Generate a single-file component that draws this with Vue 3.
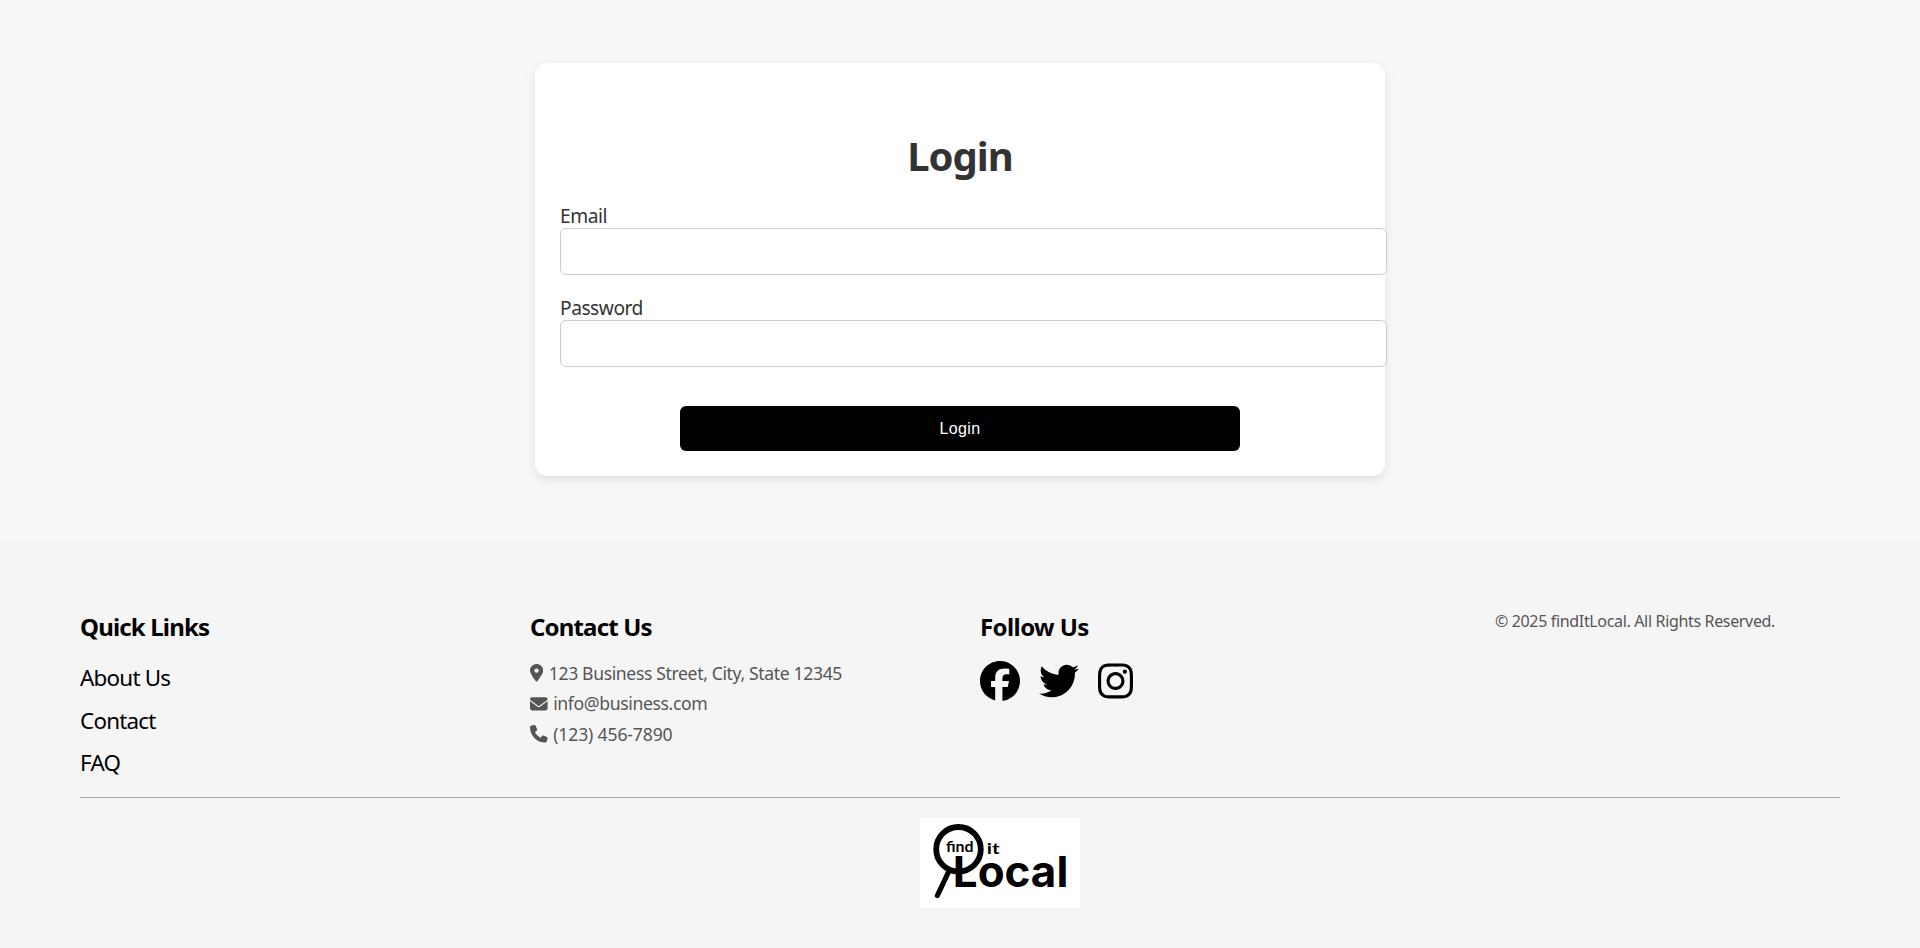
<script setup>
const links = ['About Us', 'Contact', 'FAQ']
</script>

<template>
  <div class="page">
    <main class="auth">
      <form class="card" @submit.prevent>
        <h1>Login</h1>
        <label for="email">Email</label>
        <input id="email" type="email" />
        <label for="password" class="second">Password</label>
        <input id="password" type="password" />
        <button type="submit">Login</button>
      </form>
    </main>

    <footer class="footer">
      <div class="columns">
        <section>
          <h3>Quick Links</h3>
          <ul class="links">
            <li v-for="l in links" :key="l"><a>{{ l }}</a></li>
          </ul>
        </section>
        <section>
          <h3>Contact Us</h3>
          <p class="contact">
            <svg width="13.2" height="17.6" viewBox="0 0 384 512"><path d="M215.7 499.2C267 435 384 279.4 384 192C384 86 298 0 192 0S0 86 0 192c0 87.4 117 243 168.3 307.2c12.3 15.3 35.1 15.3 47.4 0zM192 128a64 64 0 1 1 0 128 64 64 0 1 1 0-128z" /></svg>
            <span>123 Business Street, City, State 12345</span>
          </p>
          <p class="contact">
            <svg width="17.6" height="17.6" viewBox="0 0 512 512"><path d="M48 64C21.500 64 0 85.500 0 112c0 15.100 7.100 29.300 19.200 38.400L236.800 313.600c11.400 8.500 27 8.500 38.400 0L492.800 150.400c12.100-9.100 19.200-23.300 19.200-38.400c0-26.500-21.500-48-48-48H48zM0 176V384c0 35.300 28.700 64 64 64H448c35.300 0 64-28.700 64-64V176L294.400 339.200c-22.800 17.100-54 17.100-76.800 0L0 176z" /></svg>
            <span>info@business.com</span>
          </p>
          <p class="contact phone">
            <svg width="17.6" height="17.6" viewBox="0 0 512 512"><path d="M164.900 24.600c-7.700-18.600-28-28.500-47.400-23.200l-88 24C12.100 30.200 0 46 0 64C0 311.400 200.600 512 448 512c18 0 33.800-12.100 38.600-29.500l24-88c5.300-19.400-4.600-39.700-23.200-47.400l-96-40c-16.300-6.800-35.200-2.100-46.300 11.600L304.700 368C234.300 334.700 177.300 277.700 144 207.300L193.300 167c13.700-11.200 18.400-30 11.600-46.300l-40-96z" /></svg>
            <span>(123) 456-7890</span>
          </p>
        </section>
        <section>
          <h3 class="follow">Follow Us</h3>
          <div class="social">
            <svg width="40" height="40" viewBox="0 0 512 512"><path d="M512 256C512 114.600 397.400 0 256 0S0 114.600 0 256C0 376 82.700 476.800 194.200 504.500V334.200H141.400V256h52.800V222.300c0-87.100 39.400-127.500 125-127.500c16.200 0 44.200 3.200 55.700 6.400V172c-6-.6-16.500-1-29.600-1c-42 0-58.200 15.900-58.200 57.200V256h83.600l-14.400 78.200H287V510.100C413.800 494.800 512 386.900 512 256z" /></svg>
            <svg width="40" height="40" viewBox="0 0 512 512"><path d="M459.370 151.716c.325 4.548.325 9.097.325 13.645 0 138.720-105.583 298.558-298.558 298.558-59.452 0-114.680-17.219-161.137-47.106 8.447.974 16.568 1.299 25.340 1.299 49.055 0 94.213-16.568 130.274-44.832-46.132-.975-84.792-31.188-98.112-72.772 6.498.974 12.995 1.624 19.818 1.624 9.421 0 18.843-1.300 27.614-3.573-48.081-9.747-84.143-51.980-84.143-102.985v-1.299c13.969 7.797 30.214 12.670 47.431 13.319-28.264-18.843-46.781-51.005-46.781-87.391 0-19.492 5.197-37.360 14.294-52.954 51.655 63.675 129.300 105.258 216.365 109.807-1.624-7.797-2.599-15.918-2.599-24.040 0-57.828 46.782-104.934 104.934-104.934 30.213 0 57.502 12.670 76.670 33.137 23.715-4.548 46.456-13.320 66.599-25.340-7.798 24.366-24.366 44.833-46.132 57.827 21.117-2.273 41.584-8.122 60.426-16.243-14.292 20.791-32.161 39.308-52.628 54.253z" /></svg>
            <svg width="35" height="40" viewBox="0 0 448 512"><path d="M224.100 141c-63.600 0-114.900 51.300-114.900 114.900s51.300 114.900 114.900 114.900S339 319.500 339 255.900 287.700 141 224.100 141zm0 189.600c-41.100 0-74.700-33.500-74.700-74.700s33.500-74.700 74.700-74.700 74.700 33.500 74.700 74.700-33.600 74.700-74.700 74.700zm146.400-194.300c0 14.900-12 26.800-26.800 26.800-14.900 0-26.800-12-26.800-26.800s12-26.800 26.800-26.800 26.800 12 26.800 26.800zm76.100 27.200c-1.700-35.900-9.900-67.700-36.200-93.900-26.200-26.200-58-34.400-93.900-36.200-37-2.100-147.900-2.100-184.900 0-35.800 1.700-67.600 9.900-93.900 36.100s-34.400 58-36.200 93.900c-2.100 37-2.100 147.900 0 184.900 1.700 35.900 9.900 67.700 36.200 93.900s58 34.400 93.900 36.200c37 2.100 147.900 2.100 184.900 0 35.900-1.700 67.700-9.900 93.900-36.200 26.200-26.200 34.400-58 36.200-93.900 2.100-37 2.100-147.800 0-184.800zM398.800 388c-7.800 19.600-22.900 34.700-42.600 42.600-29.500 11.700-99.500 9-132.100 9s-102.700 2.600-132.100-9c-19.600-7.800-34.700-22.900-42.600-42.600-11.700-29.500-9-99.500-9-132.100s-2.600-102.700 9-132.100c7.800-19.600 22.900-34.700 42.600-42.600 29.500-11.700 99.500-9 132.100-9s102.700-2.600 132.100 9c19.600 7.800 34.700 22.900 42.600 42.600 11.700 29.500 9 99.500 9 132.100s2.700 102.700-9 132.100z" /></svg>
          </div>
        </section>
        <section>
          <p class="copyright">© 2025 findItLocal. All Rights Reserved.</p>
        </section>
      </div>
      <hr />
      <svg class="logo" width="160" height="90" viewBox="0 0 160 90">
        <rect width="160" height="90" fill="#fff" />
        <circle cx="38.500" cy="31.300" r="22.300" fill="none" stroke="#000" stroke-width="5.800" />
        <path d="M28.500 54L17.400 77.500" stroke="#000" stroke-width="5.200" stroke-linecap="round" />
        <text class="small" x="26" y="34" textLength="27.500" lengthAdjust="spacingAndGlyphs">find</text>
        <text class="small" x="66.800" y="36" textLength="13" lengthAdjust="spacingAndGlyphs">it</text>
        <text class="big" x="32.800" y="69" textLength="115.500" lengthAdjust="spacingAndGlyphs">Local</text>
      </svg>
    </footer>
  </div>
</template>

<style>
body {
  margin: 0;
  background: #f5f5f5;
}
</style>

<style scoped>
.page {
  min-height: 948px;
  background: #f5f5f5;
  color: #333;
  font-family: "Noto Sans", "Open Sans", sans-serif;
}
.auth {
  display: flex;
  justify-content: center;
  padding: 63px 0;
  background: #f8f8f8;
}
.card {
  display: flex;
  flex-direction: column;
  box-sizing: border-box;
  width: 850px;
  height: 413px;
  padding: 25px;
  border-radius: 12px;
  background: #fff;
  box-shadow: 0 4px 12px rgba(0, 0, 0, 0.1);
}
h1 {
  margin: 41px 0 20px;
  font-size: 40px;
  line-height: 54px;
  letter-spacing: -1px;
  text-align: center;
}
label {
  height: 25px;
  font-size: 19.2px;
  line-height: 26px;
  letter-spacing: -0.48px;
}
.second {
  margin-top: 20px;
}
input {
  box-sizing: border-box;
  width: 827px;
  height: 47px;
  padding: 12px;
  border: 1px solid #ccc;
  border-radius: 6px;
  background: #fff;
  font-size: 16px;
}
button {
  align-self: center;
  width: 560px;
  height: 45px;
  margin-top: 39px;
  border: 0;
  border-radius: 6px;
  background: #000;
  color: #fff;
  font: 16px "Liberation Sans", Arial, sans-serif;
  letter-spacing: 0.35px;
}
.footer {
  padding: 71px 80px 40px;
}
.columns {
  display: grid;
  grid-template-columns: repeat(4, 1fr);
  gap: 40px;
  height: 186px;
}
h3 {
  margin: 1px 0 0;
  color: #000;
  font-size: 24px;
  line-height: 32px;
  letter-spacing: -0.83px;
}
.follow {
  letter-spacing: -0.58px;
}
.links {
  margin: 20px 0 0;
  padding: 0;
  list-style: none;
  color: #000;
}
.links li {
  height: 42.5px;
  font-size: 22.4px;
  line-height: 30px;
  letter-spacing: -0.77px;
}
.contact {
  display: flex;
  align-items: center;
  gap: 5.6px;
  height: 24px;
  margin: 0 0 6.4px;
  color: #555;
  font-size: 17.6px;
  line-height: 24px;
  letter-spacing: -0.37px;
  white-space: nowrap;
}
.phone {
  letter-spacing: -0.15px;
}
h3 + .contact {
  margin-top: 18px;
}
.contact svg,
.social svg {
  display: block;
  fill: currentColor;
}
.social {
  display: flex;
  gap: 19px;
  margin-top: 18px;
  color: #000;
}
.copyright {
  margin: 0;
  color: #555;
  font-size: 16px;
  line-height: 22px;
  letter-spacing: -0.34px;
  text-align: center;
}
hr {
  height: 1px;
  margin: 1px 0 20px;
  border: 0;
  background: #aaa;
}
.logo {
  display: block;
  margin-left: 840px;
}
.small {
  font: bold 15.5px Lato, sans-serif;
}
.big {
  font: bold 43px Inter, "Liberation Sans", sans-serif;
}
</style>
